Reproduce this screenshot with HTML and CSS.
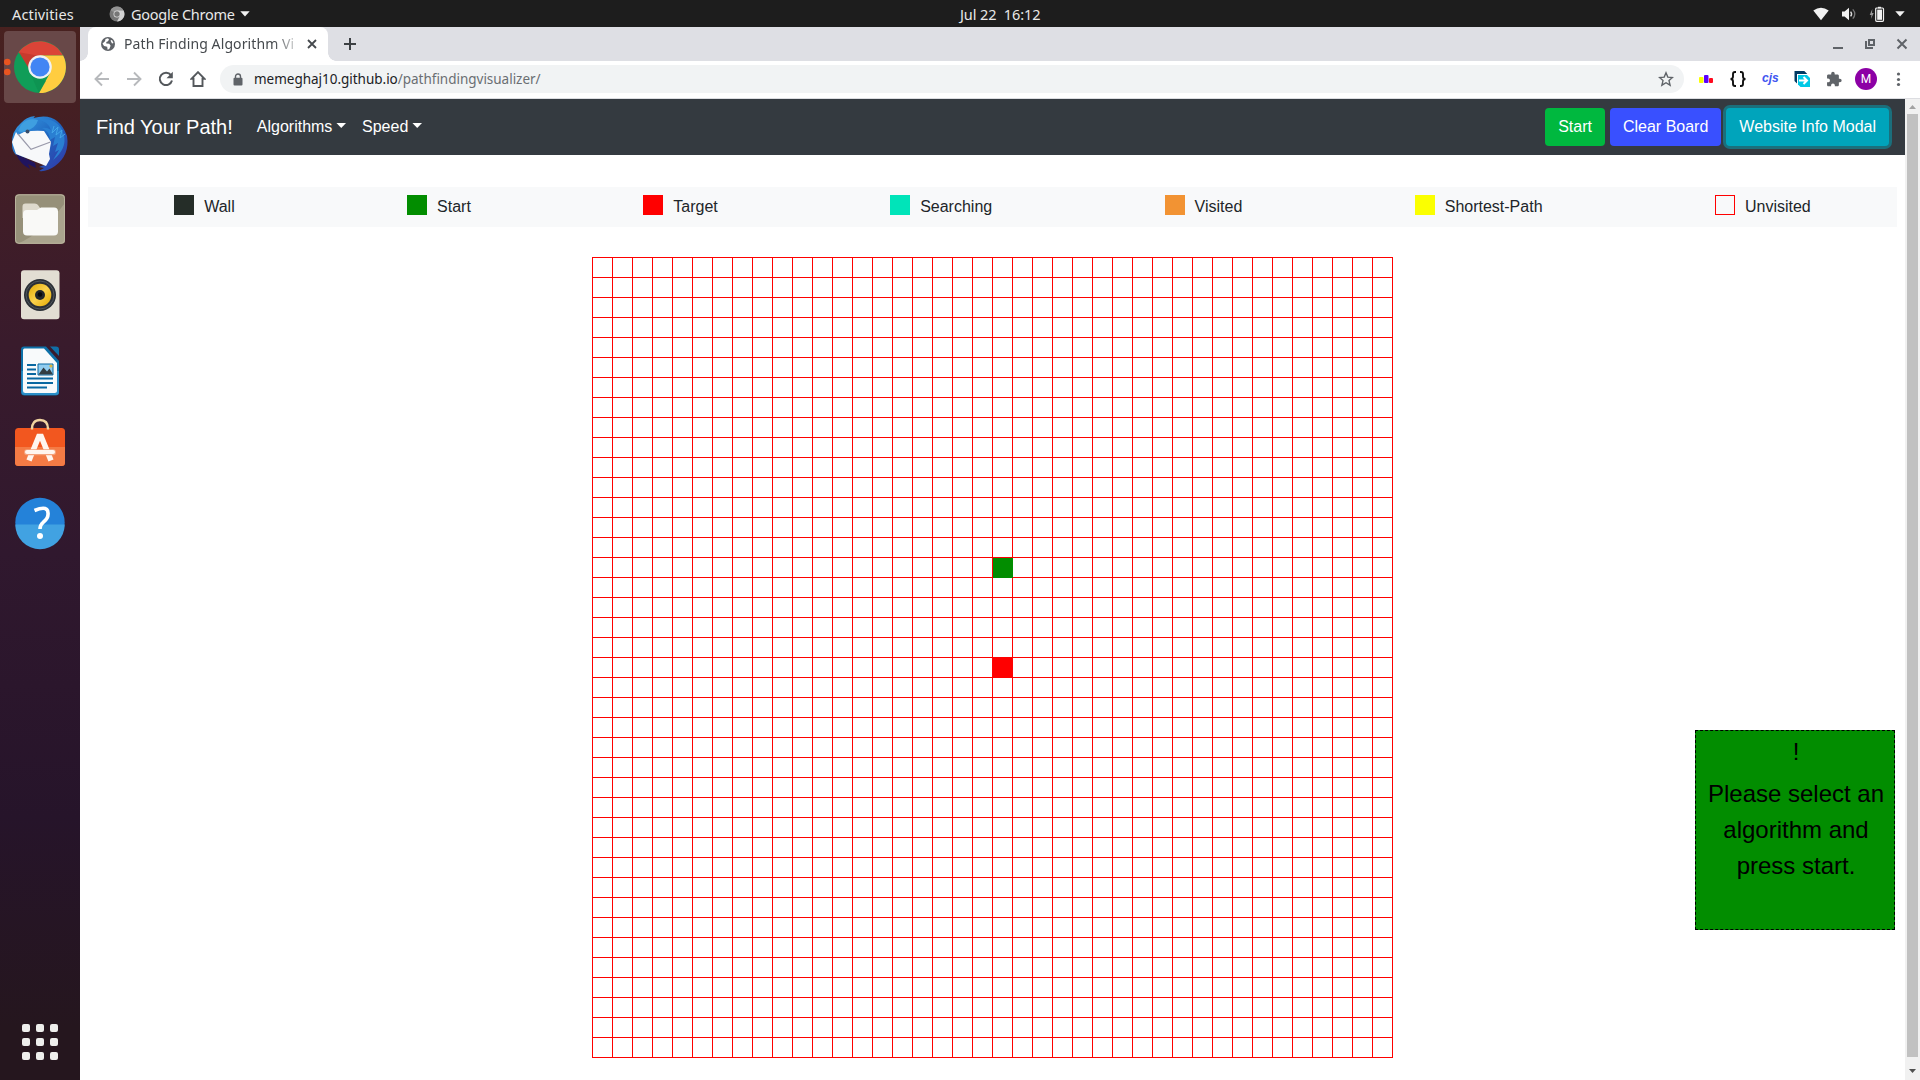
FILE: index.html
```html
<!DOCTYPE html>
<html lang="en">
<head>
<meta charset="utf-8">
<title>Path Finding Algorithm Visualizer</title>
<link rel="stylesheet" href="styles.css">
</head>
<body>
<header class="topbar">
  <div class="topbar-left">
    <span class="activities">Activities</span>
    <span class="app-menu">
      <svg width="16" height="16" viewBox="0 0 16 16"><circle cx="8" cy="8" r="7.5" fill="#777"/><path d="M8 8L1.5 4.2A7.5 7.5 0 0 1 14.5 4.5H8z" fill="#929292"/><path d="M8 4.5h6.6A7.5 7.5 0 0 1 8 15.5l3.2-6z" fill="#d2d2d2"/><circle cx="8" cy="8" r="3.5" fill="#ddd"/><circle cx="8" cy="8" r="2.7" fill="#777"/></svg>
      <span class="app-name">Google Chrome</span>
      <svg width="10" height="6" viewBox="0 0 10 6"><path d="M.3.3h9.4L5 5.5z" fill="#f2f2f2"/></svg>
    </span>
  </div>
  <div class="clock">Jul 22&nbsp; 16:12</div>
  <div class="status">
    <svg width="16" height="14" viewBox="0 0 16 14"><path d="M.3 3.6Q8-2.2 15.7 3.6L8 13.3z" fill="#f2f2f2"/></svg>
    <svg width="16" height="14" viewBox="0 0 16 14"><path d="M1 4.5h2.6L8 .7v12.6L3.6 9.5H1z" fill="#f2f2f2"/><path d="M9.6 4.6q2 2.4 0 4.8" fill="none" stroke="#ddd" stroke-width="1.4"/><path d="M11.8 2.4q4 4.6 0 9.2" fill="none" stroke="#777" stroke-width="1.3"/></svg>
    <svg width="16" height="16" viewBox="0 0 16 16"><path d="M3.3 3L.7 9h1.8l-.6 4 2.8-6H3z" fill="#999"/><path d="M9 .8h3v1.6H9z" fill="#f2f2f2"/><rect x="6.7" y="2" width="7.8" height="13.3" rx="1" fill="none" stroke="#f2f2f2" stroke-width="1.2"/><path d="M8.2 3.6h4.8v10.2H8.2z" fill="#f2f2f2"/></svg>
    <svg width="10" height="6" viewBox="0 0 10 6"><path d="M.3.3h9.4L5 5.5z" fill="#f2f2f2"/></svg>
  </div>
</header>
<div class="desktop">
  <aside class="dock">
    <div class="dock-item active">
      <svg width="72" height="72" viewBox="0 0 72 72">
        <circle cx="3.3" cy="31" r="3.3" fill="#e95420"/><circle cx="3.3" cy="41" r="3.3" fill="#e95420"/>
        <circle cx="36" cy="36" r="26" fill="#109d58"/>
        <path d="M36 36L14.5 21.5A26 26 0 0 1 59 24.4H36z" fill="#db4437"/>
        <path d="M15 21.2l11.5 19L36 25z" fill="#c73a2e"/>
        <path d="M36 24.4h23.2A26 26 0 0 1 35 62l11-20z" fill="#ffcd40"/>
        <path d="M26 41.7L36 48l6 2-7 12z" fill="#0b8b4b" opacity=".5"/>
        <circle cx="36" cy="36" r="11.8" fill="#f1f1f1"/><circle cx="36" cy="36" r="9.6" fill="#4285f4"/>
      </svg>
    </div>
    <div class="dock-item">
      <svg width="72" height="72" viewBox="0 0 72 72">
        <defs><linearGradient id="bird" x1="0" y1="0" x2="1" y2="1"><stop offset="0" stop-color="#3aa0e6"/><stop offset=".5" stop-color="#1f66c0"/><stop offset="1" stop-color="#3434a4"/></linearGradient></defs>
        <path d="M8 38Q7 24 17 16q5-6 14-7l-1.500 2Q54 4 63 29q3 19-12 30-8 6-16 5l5-3-5-1 8-3L12 48q-4-4-4-10z" fill="url(#bird)"/>
        <path d="M12 47q4 10 14 15l-2-5 8 4-1-5z" fill="#20145e"/>
        <path d="M12 25l2 3 6-3q11-2 20-1l7 11-2 12 1 5-4 7-30-12-4-12z" fill="#f7f8fa"/>
        <path d="M14 27l13 15.300L46.500 35" fill="none" stroke="#99a" stroke-width="1.200"/>
        <path d="M17 18Q23 10 34 13q-2 8-12 11-5 2-8 0z" fill="#3f9fe0"/>
        <path d="M34 13q10 1 13 10-4-3-9-2 8 4 8 12l5-3-2 9 5-3-3 9 4-2-6 10q14-11 11-25Q54 9 34 13z" fill="#2a7fd2"/>
        <path d="M50 19l-2 7 6-6-2 8 6-5-2 8 5-4" fill="none" stroke="#43a5e8"/>
        <circle cx="23.500" cy="24.500" r="2" fill="#374d6b"/>
      </svg>
    </div>
    <div class="dock-item">
      <svg width="72" height="72" viewBox="0 0 72 72">
        <rect x="11" y="11.300" width="50" height="49.500" rx="3.500" fill="#969079"/>
        <path d="M61 20v37q0 3.500-3.500 3.500H14q24-10 47-40.500z" fill="#aaa48e"/>
        <rect x="11.500" y="11.800" width="49" height="48.500" rx="3.500" fill="none" stroke="#b9b39d" stroke-width="1"/>
        <path d="M18.500 35V23.500q0-3 3-3h9q3 0 4.500 3l2 3H46V35z" fill="#dedacd"/>
        <path d="M19 31q0-4 4-4h10l4-2.500h13q4 0 4 4v20q0 4-4 4H23q-4 0-4-4z" fill="#f9f9f7"/>
      </svg>
    </div>
    <div class="dock-item">
      <svg width="72" height="72" viewBox="0 0 72 72">
        <defs><linearGradient id="cone" x1="0" y1="0" x2="1" y2="1"><stop offset="0" stop-color="#e0a800"/><stop offset=".5" stop-color="#fbd24c"/><stop offset="1" stop-color="#e0a800"/></linearGradient></defs>
        <rect x="17" y="11.300" width="38.500" height="49" rx="3" fill="#e2ded3"/>
        <circle cx="36" cy="36" r="16" fill="#2b3036"/><circle cx="36" cy="36" r="14" fill="none" stroke="#515860" stroke-width="1"/>
        <circle cx="36" cy="36" r="11.300" fill="url(#cone)"/><circle cx="36" cy="36" r="5" fill="#22262b"/><circle cx="36" cy="35.500" r="2.300" fill="#08090b"/>
      </svg>
    </div>
    <div class="dock-item">
      <svg width="72" height="72" viewBox="0 0 72 72">
        <path d="M20 11.500h22L55 26v31q0 3.500-3.500 3.500h-31q-3.500 0-3.500-3.500V14.500q0-3 3-3z" fill="#0d70a8"/>
        <path d="M17.500 36H55v21q0 3-3 3H20.500q-3 0-3-3z" fill="#2b8fc8"/>
        <path d="M20.500 13.500H40L53 28v27.500q0 2.500-2.500 2.500h-29q-2.500 0-2.500-2.500V15.500q0-2 1.500-2z" fill="#f8fafb"/>
        <path d="M46 11.500h6q3 0 3 3V21z" fill="#106fa6"/>
        <path d="M23 30h9M23 34.500h9M23 39h9M23 43.500h26M23 48h26M23 52.500h20" stroke="#0a68a1" stroke-width="2.200"/>
        <path d="M34 29h15v11H34z" fill="#91cdf0" stroke="#0a68a1" stroke-width="1"/>
        <path d="M34.500 39.500l5-7 3.500 4 2.500-3 3.500 6z" fill="#333d42"/><circle cx="47" cy="31" r="1.600" fill="#e0b53c"/>
      </svg>
    </div>
    <div class="dock-item">
      <svg width="72" height="72" viewBox="0 0 72 72">
        <path d="M28 18q0-9 8-9t8 9" fill="none" stroke="#f1d4a0" stroke-width="2.400"/>
        <rect x="11" y="17" width="50" height="38" rx="3.500" fill="#f2571f"/>
        <path d="M11 36h50v15.500q0 3.500-3.500 3.500h-43Q11 55 11 51.500z" fill="#f47b45"/>
        <path d="M28 18.500v-2M44 18.500v-2" stroke="#f1d4a0" stroke-width="2.400"/>
        <path d="M25 49.500L34.800 25.500h2.400L47 49.500" fill="none" stroke="#fff5ee" stroke-width="5.500"/>
        <path d="M23 41.300h26" stroke="#f4a27c" stroke-width="6" stroke-linecap="round"/><path d="M23 41h26" stroke="#fff5ee" stroke-width="4" stroke-linecap="round"/>
      </svg>
    </div>
    <div class="dock-item">
      <svg width="72" height="72" viewBox="0 0 72 72">
        <circle cx="36" cy="35.500" r="24.700" fill="#2482d9"/>
        <path d="M11.300 37.500h49.400a24.700 24.700 0 0 1-49.400 0z" fill="#41a2e2"/>
        <path d="M30.500 23.500Q45 17.500 44 27.500q0 4-4.500 7.500-3.500 3-3.500 7" fill="none" stroke="#fff" stroke-width="3.600"/><circle cx="36" cy="49" r="3" fill="#fff"/>
      </svg>
    </div>
    <div class="apps-grid"><i></i><i></i><i></i><i></i><i></i><i></i><i></i><i></i><i></i></div>
  </aside>
  <section class="browser">
    <div class="tabstrip">
      <div class="tab">
        <svg width="14" height="14" viewBox="0 0 14 14"><circle cx="7" cy="7" r="7" fill="#5f6368"/><path d="M1.500 6.500L4 4.200 4.500 1.900 7 1.300l1 1.200-1 1.800-1.700.6v1.600l3 .2 1.300 2L8.300 12l-1.700.8-.4-3L3 9z" fill="#fff"/><path d="M9.500 3.500l1.500-.5 1.500 3-1.500.5z" fill="#fff"/></svg>
        <span class="tab-title">Path Finding Algorithm Vi</span>
        <svg width="10" height="10" viewBox="0 0 10 10"><path d="M1 1l8 8M9 1L1 9" stroke="#45494d" stroke-width="1.800"/></svg>
      </div>
      <svg class="new-tab" width="12" height="12" viewBox="0 0 12 12"><path d="M6 0v12M0 6h12" stroke="#3c4043" stroke-width="2"/></svg>
      <div class="window-controls">
        <svg width="14" height="14" viewBox="0 0 14 14"><path d="M2 11h10" stroke="#5f6368" stroke-width="2"/></svg>
        <svg width="14" height="14" viewBox="0 0 14 14"><path d="M6 3h5v5H6z M3 4v7h7" fill="none" stroke="#5f6368" stroke-width="2"/></svg>
        <svg width="14" height="14" viewBox="0 0 14 14"><path d="M2.500 2.500l9 9M11.500 2.500l-9 9" stroke="#5f6368" stroke-width="2"/></svg>
      </div>
    </div>
    <div class="toolbar">
      <div class="nav-icons">
        <svg width="16" height="16" viewBox="0 0 16 16"><path d="M15 8H2M8 1.500L1.500 8 8 14.500" fill="none" stroke="#b7b9bc" stroke-width="1.900"/></svg>
        <svg width="16" height="16" viewBox="0 0 16 16"><path d="M1 8h13M8 1.500L14.500 8 8 14.500" fill="none" stroke="#b7b9bc" stroke-width="1.900"/></svg>
        <svg width="16" height="16" viewBox="0 0 16 16"><path d="M13 4.200A6.200 6.200 0 1 0 14 9.500" fill="none" stroke="#54585c" stroke-width="2"/><path d="M14.800.8v6.400H8.500z" fill="#54585c"/></svg>
        <svg width="16" height="16" viewBox="0 0 16 16"><path d="M8 1.200L1.500 7.800H3.500V15h9V7.800h2z" fill="none" stroke="#54585c" stroke-width="1.900"/></svg>
      </div>
      <div class="omnibox">
        <svg width="10" height="13" viewBox="0 0 10 13"><path d="M2.500 6V3.500a2.500 2.500 0 0 1 5 0V6" fill="none" stroke="#5f6368" stroke-width="1.400"/><rect x=".5" y="4.800" width="9" height="7.700" rx="1" fill="#5f6368"/></svg>
        <span class="url"><b>memeghaj10.github.io</b>/pathfindingvisualizer/</span>
        <svg width="16" height="16" viewBox="0 0 16 16"><path d="M8 1.800l1.800 4.300 4.700.4L11 9.600l1.100 4.600L8 11.700l-4.100 2.500L5 9.600 1.500 6.500l4.700-.4z" fill="none" stroke="#5f6368" stroke-width="1.400"/></svg>
      </div>
      <div class="extensions">
        <svg width="16" height="16" viewBox="0 0 16 16"><rect x="1" y="6" width="4.500" height="6" rx="1" fill="#faff00"/><rect x="6" y="4" width="4.500" height="8" rx="1" fill="#5a00ff"/><rect x="11" y="7" width="4" height="5" rx="1" fill="#ff0a1e"/></svg>
        <svg width="16" height="16" viewBox="0 0 16 16"><path d="M6 1H5Q3 1 3 3v2.500Q3 8 .5 8 3 8 3 10.500V13q0 2 2 2h1M10 1h1q2 0 2 2v2.500Q13 8 15.500 8 13 8 13 10.500V13q0 2-2 2h-1" fill="none" stroke="#111" stroke-width="1.900"/></svg>
        <span class="cjs">cjs</span>
        <svg width="16" height="16" viewBox="0 0 16 16"><path d="M.5 0h9.800l3 3H3v9.500L.5 10z" fill="#003a63"/><path d="M4 4h9l3 3v9H6.500L4 13.500z" fill="#00c8e6"/><path d="M5 9.500h8M9.500 6l3.500 3.500L9.500 13" fill="none" stroke="#fff" stroke-width="2"/></svg>
        <svg width="16" height="16" viewBox="1 0 22 23"><path d="M20.500 11H19V7c0-1.100-.9-2-2-2h-4V3.500a2.500 2.500 0 0 0-5 0V5H4c-1.100 0-2 .9-2 2v3.800h1.500a2.700 2.700 0 0 1 0 5.400H2V20c0 1.100.9 2 2 2h3.800v-1.500a2.700 2.700 0 0 1 5.400 0V22H17c1.100 0 2-.9 2-2v-4h1.500a2.500 2.500 0 0 0 0-5z" fill="#5f6368"/></svg>
        <span class="avatar">M</span>
        <svg width="16" height="16" viewBox="0 0 16 16"><g fill="#5f6368"><circle cx="8.500" cy="3" r="1.600"/><circle cx="8.500" cy="8.500" r="1.600"/><circle cx="8.500" cy="13.500" r="1.600"/></g></svg>
      </div>
    </div>
    <div class="viewport">
      <main class="page">
        <nav class="navbar">
          <span class="brand">Find Your Path!</span>
          <span class="nav-link">Algorithms</span>
          <span class="nav-link">Speed</span>
          <div class="buttons">
            <button class="btn btn-start">Start</button>
            <button class="btn btn-clear">Clear Board</button>
            <button class="btn btn-info">Website Info Modal</button>
          </div>
        </nav>
        <ul class="legend">
          <li><i class="swatch wall"></i>Wall</li>
          <li><i class="swatch start"></i>Start</li>
          <li><i class="swatch target"></i>Target</li>
          <li><i class="swatch searching"></i>Searching</li>
          <li><i class="swatch visited"></i>Visited</li>
          <li><i class="swatch shortest"></i>Shortest-Path</li>
          <li><i class="swatch unvisited"></i>Unvisited</li>
        </ul>
        <div class="board"><i class="cell cell-start"></i><i class="cell cell-target"></i></div>
        <div class="note"><p class="bang">!</p><p>Please select an algorithm and press start.</p></div>
      </main>
      <div class="scrollbar">
        <svg width="15" height="15" viewBox="0 0 15 15"><path d="M4 10l3.500-4L11 10z" fill="#a3a3a3"/></svg>
        <div class="thumb"></div>
        <svg width="15" height="15" viewBox="0 0 15 15"><path d="M4 5l3.500 4L11 5z" fill="#505050"/></svg>
      </div>
    </div>
  </section>
</div>
</body>
</html>
```
FILE: styles.css
```css
* { box-sizing: border-box; }
body { margin: 0; width: 1920px; height: 1080px; overflow: hidden; display: flex; flex-direction: column; background: #fff; font: 16px/24px "Liberation Sans", Arial, sans-serif; color: #212529; }
svg { display: block; flex: none; }
p, ul { margin: 0; padding: 0; }

/* Desktop panel; the clock is centred over the area right of the dock */
.topbar { height: 27px; flex: none; background: #1d1d1d; color: #e8e8e8; display: grid; grid-template-columns: 960px 1fr auto; align-items: center; font: 14.5px/26px "Noto Sans", sans-serif; }
.topbar-left { display: flex; padding-left: 12px; }
.activities { width: 97px; letter-spacing: .15px; }
.app-menu { display: flex; align-items: center; }
.app-name { width: 103px; margin: 0 6px 0 6px; white-space: nowrap; letter-spacing: -.25px; }
.clock { white-space: pre; letter-spacing: -.1px; }
.status { display: flex; justify-content: flex-end; align-items: center; gap: 12px; padding-right: 15px; }
.status svg:not(:last-child) { position: relative; left: 2px; }

.desktop { flex: 1; min-height: 0; display: flex; }
.dock { width: 80px; flex: none; display: flex; flex-direction: column; align-items: center; gap: 4px; padding: 4px 0 20px; background: linear-gradient(#48211f 0, #431e25 12%, #391b2c 30%, #30182e 50%, #26142a 75%, #25161e 95%); }
.dock-item { width: 72px; height: 72px; }
.dock-item.active { background: #684848; border-radius: 4px; }
.apps-grid { margin-top: auto; display: grid; grid-template-columns: repeat(3, 8px); gap: 6px; }
.apps-grid i { width: 8px; height: 8px; border-radius: 2px; background: #eeeeec; }

/* Browser frame */
.browser { flex: 1; min-width: 0; display: flex; flex-direction: column; }
.tabstrip { height: 34px; flex: none; background: #dedfe4; display: flex; align-items: center; padding: 0 11px 0 8px; }
.tab { position: relative; width: 240px; height: 34px; display: flex; align-items: center; background: #fff; border-radius: 8px 8px 0 0; padding: 0 11px 0 13px; }
.tab::before, .tab::after { content: ""; position: absolute; bottom: 0; width: 8px; height: 8px; }
.tab::before { left: -8px; background: radial-gradient(circle at 0 0, #dedfe4 7.500px, #fff 8px); }
.tab::after { right: -8px; background: radial-gradient(circle at 100% 0, #dedfe4 7.500px, #fff 8px); }
.tab-title { width: 177px; margin: 0 6px 0 9px; white-space: nowrap; font: 14px/20px "Noto Sans", sans-serif; color: #45494d; letter-spacing: .1px; -webkit-mask-image: linear-gradient(90deg, #000 150px, transparent 178px); mask-image: linear-gradient(90deg, #000 150px, transparent 178px); }
.new-tab { margin-left: 16px; }
.window-controls { margin-left: auto; display: flex; gap: 18px; }
.toolbar { height: 38px; flex: none; display: flex; align-items: center; background: #fff; border-bottom: 1px solid #dcdde1; padding: 0 14px 1px; }
.nav-icons { display: flex; gap: 16px; }
.omnibox { width: 1464px; height: 28px; margin: 0 14px 0 14px; padding: 0 10px 0 13px; border-radius: 14px; background: #f1f3f4; display: flex; align-items: center; }
.url { flex: 1; margin-left: 11px; font: 13.500px/28px "Noto Sans", sans-serif; color: #6a6e72; letter-spacing: -.02px; }
.url b { font-weight: 400; color: #202124; }
.extensions { display: flex; align-items: center; gap: 16px; }
.cjs { width: 16px; font: italic bold 12px/16px "Liberation Sans", sans-serif; color: #4156f0; margin-top: -2px; }
.avatar { width: 22px; height: 22px; margin: 0 -3px; border-radius: 50%; background: #8c00a5; color: #fff; text-align: center; font: 12px/23px Roboto, sans-serif; }

.viewport { flex: 1; min-height: 0; display: flex; }
.page { position: relative; flex: 1; min-width: 0; }
.navbar { height: 56px; display: flex; align-items: center; padding: 0 16px; background: #343a40; color: #fff; }
.brand { font-size: 20px; line-height: 30px; margin-right: 16px; }
.nav-link { padding: 0 8px; }
.nav-link::after { content: ""; display: inline-block; width: 9.600px; height: 5px; margin-left: 4.100px; vertical-align: 4px; background: #fff; clip-path: polygon(0 0, 100% 0, 50% 100%); }
.buttons { margin-left: auto; display: flex; gap: 5px; }
.btn { height: 38px; padding: 0 13px; border: 0; border-radius: 4px; color: #fff; font: inherit; }
.btn-start { background: #00b83f; }
.btn-clear { background: #3950ff; }
.btn-info { background: #00a4bb; box-shadow: 0 0 0 3px #1b6f7c; }

.legend { list-style: none; height: 40px; margin: 32px 8px 0; background: #f8f9fa; display: flex; justify-content: space-around; align-items: center; }
.legend li { display: flex; align-items: center; }
.swatch { width: 20px; height: 20px; margin: -4px 10px 0 0; }
.wall { background: #252d28; }
.start { background: #028d00; }
.target { background: #f00; }
.searching { background: #00e4b9; }
.visited { background: #f29333; }
.shortest { background: #fbff00; }
.unvisited { border: 1px solid #f00; }

/* 40 by 40 cells, each 20px */
.board { width: 801px; height: 801px; margin: 30px auto 0; display: grid; grid-template: repeat(40, 20px) / repeat(40, 20px); background: repeating-linear-gradient(90deg, #f00 0 1px, transparent 1px 20px), repeating-linear-gradient(#f00 0 1px, transparent 1px 20px); }
.cell { margin: 1px -1px -1px 1px; }
.cell-start { grid-area: 16 / 21; background: #028d00; }
.cell-target { grid-area: 21 / 21; background: #f00; }

.note { position: absolute; right: 10px; top: 631px; width: 200px; height: 200px; padding: 3px 5px 0 7px; border: 1px dashed #000; background: #028d00; color: #000; text-align: center; font-size: 24px; line-height: 36px; }
.bang { margin-bottom: 6px; }
.scrollbar { width: 15px; flex: none; background: #f1f1f1; display: flex; flex-direction: column; align-items: center; }
.thumb { width: 11px; height: 943px; margin-bottom: 7px; background: #c1c1c1; }
```
